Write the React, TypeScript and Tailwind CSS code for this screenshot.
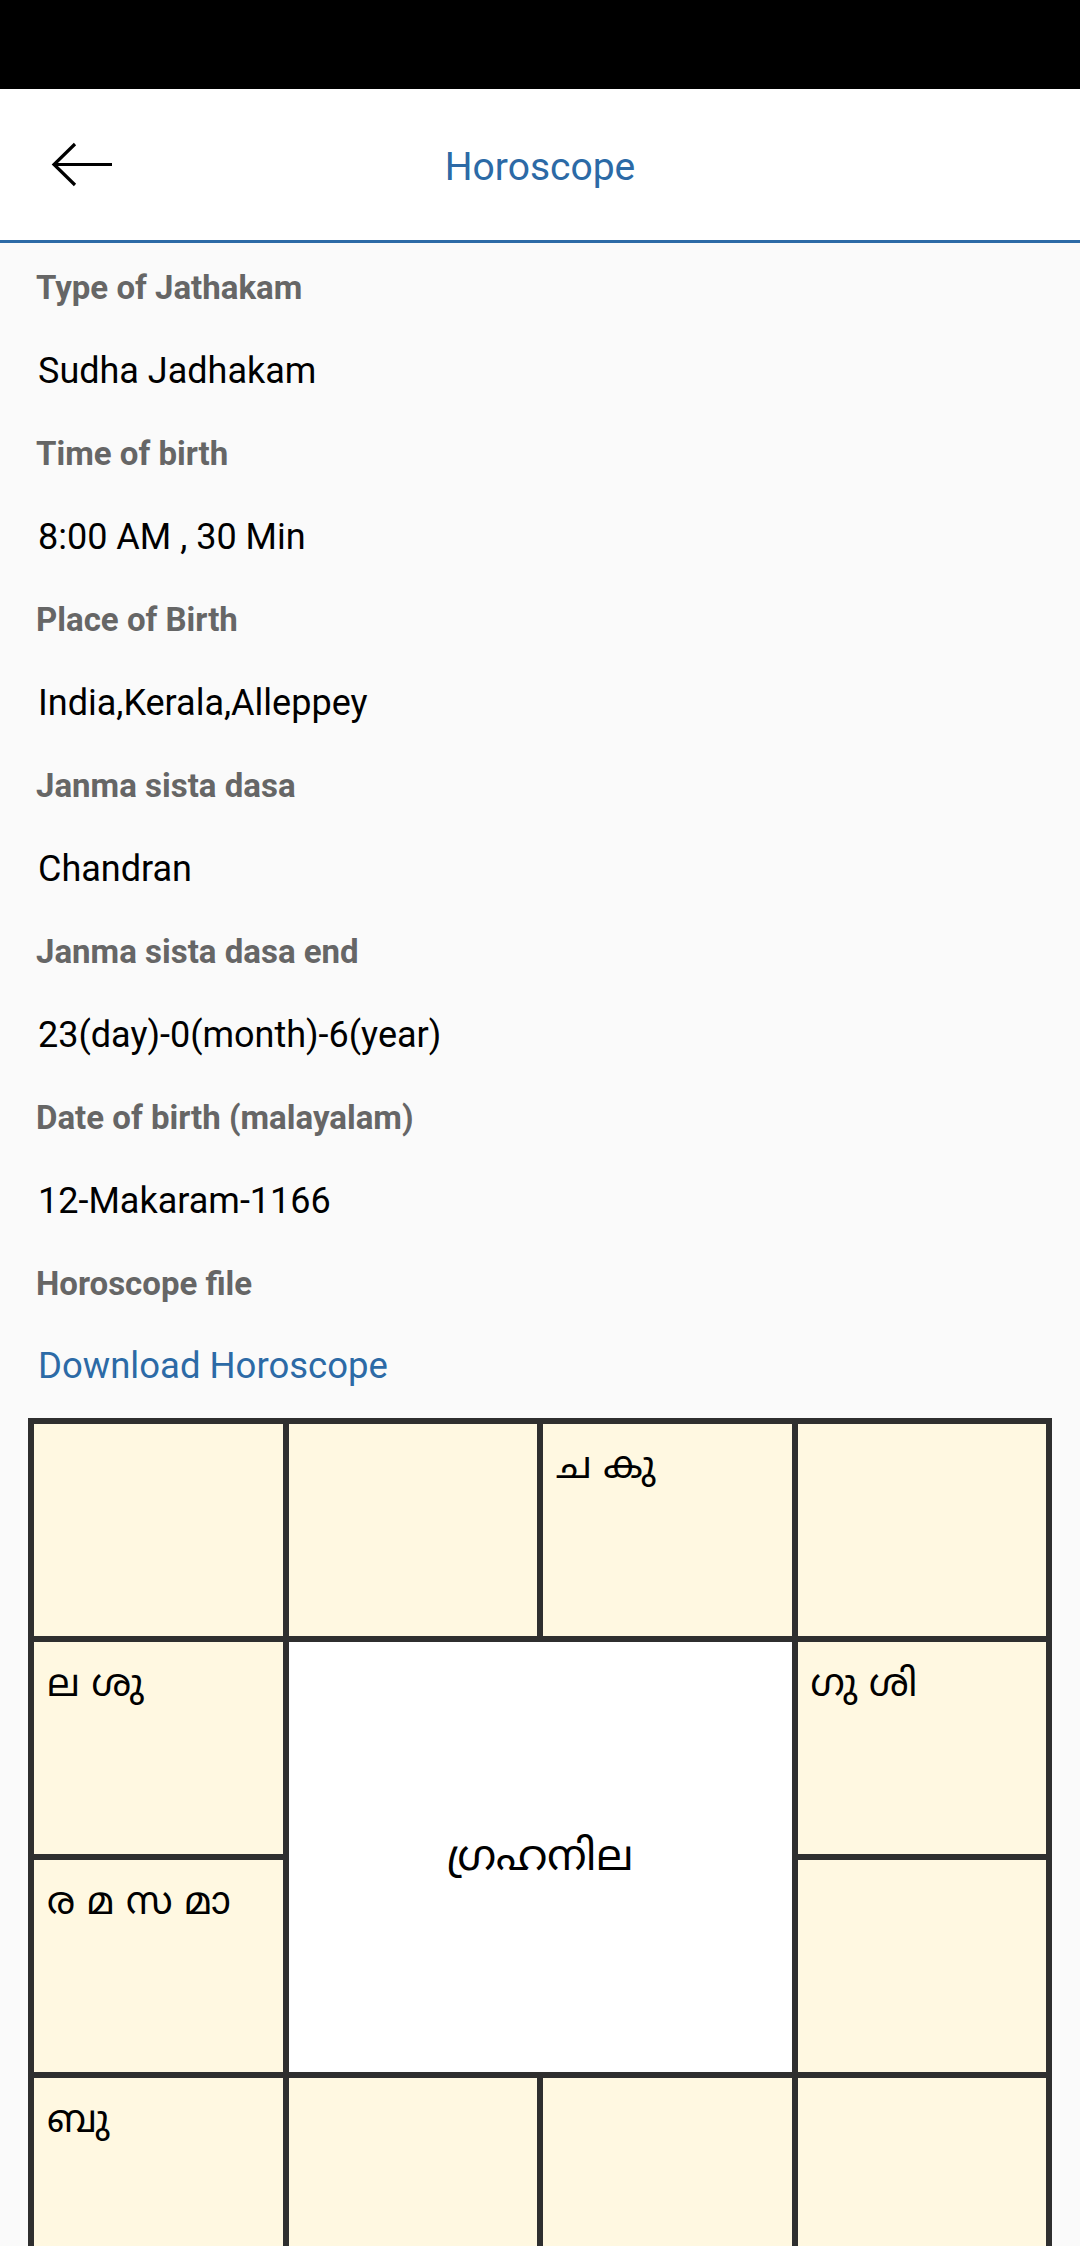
const details = [
  { label: "Type of Jathakam", value: "Sudha Jadhakam" },
  { label: "Time of birth", value: "8:00 AM , 30 Min" },
  { label: "Place of Birth", value: "India,Kerala,Alleppey" },
  { label: "Janma sista dasa", value: "Chandran" },
  { label: "Janma sista dasa end", value: "23(day)-0(month)-6(year)" },
  { label: "Date of birth (malayalam)", value: "12-Makaram-1166" },
];

const mlFont = {
  fontFamily: '"Noto Sans Malayalam", "Noto Sans Malayalam UI", Manjari, "Noto Sans", sans-serif',
};

function Cell({ text = "" }: { text?: string }) {
  return (
    <div
      className="border-[3px] border-[#2f2f2f] bg-[#fff8e1] px-[13px] pt-[22px] text-[38px] leading-[46px] text-black"
      style={mlFont}
    >
      {text}
    </div>
  );
}

export default function App() {
  return (
    <div className="min-h-screen bg-[#fafafa] font-['Roboto','Liberation_Sans',sans-serif]">
      <div className="h-[89px] bg-black" />

      <header className="flex h-[154px] items-center border-b-[3px] border-[#2c6aa6] bg-white">
        <div className="flex w-[113px] pl-[51px]">
          <svg width="62" height="46" viewBox="0 0 62 46" fill="none" stroke="black" strokeWidth={3.2}>
            <path d="M61 22.5H3" />
            <path d="M24 2L3 22.5 24 43" />
          </svg>
        </div>
        <h1 className="flex-1 pt-[6px] text-center text-[39px] font-normal text-[#2c6aa6]">Horoscope</h1>
        <div className="w-[113px]" />
      </header>

      <main className="pt-[3px]">
        {details.map((d) => (
          <div key={d.label}>
            <div className="flex h-[83px] items-center pl-[36px] text-[33px] font-bold text-[#666666]">
              {d.label}
            </div>
            <div className="flex h-[83px] items-center pl-[38px] text-[36px] text-black">{d.value}</div>
          </div>
        ))}
        <div className="flex h-[83px] items-center pl-[36px] text-[33px] font-bold text-[#666666]">
          Horoscope file
        </div>
        <div className="flex h-[83px] items-center pl-[38px] text-[36.5px] text-[#2c6aa6]">
          <a href="#">Download Horoscope</a>
        </div>

        <div className="mx-[28px] mt-[10px] grid grid-cols-4 grid-rows-[repeat(4,218px)] border-[3px] border-[#2f2f2f]">
          <Cell />
          <Cell />
          <Cell text="ച കു" />
          <Cell />
          <Cell text="ല ശു" />
          <div
            className="col-span-2 row-span-2 flex items-center justify-center border-[3px] border-[#2f2f2f] bg-white pt-[6px] text-[43px] text-black"
            style={mlFont}
          >
            ഗ്രഹനില
          </div>
          <Cell text="ഗു ശി" />
          <Cell text="ര മ സ മാ" />
          <Cell />
          <Cell text="ബു" />
          <Cell />
          <Cell />
          <Cell />
        </div>
      </main>
    </div>
  );
}
